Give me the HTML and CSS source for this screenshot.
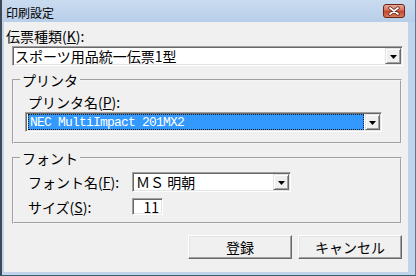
FILE: index.html
```html
<!DOCTYPE html>
<html lang="ja">
<head>
  <meta charset="UTF-8">
  <title>印刷設定</title>
  <link rel="stylesheet" href="styles.css">
</head>
<body>
  <div class="window">
    <div class="titlebar">
      <span class="title">印刷設定</span>
      <span class="close">
        <svg width="22" height="14" viewBox="0 0 22 14">
          <defs>
            <linearGradient id="cg" x1="0" y1="0" x2="0" y2="1">
              <stop offset="0" stop-color="#eab0a2"/>
              <stop offset="0.45" stop-color="#d66d55"/>
              <stop offset="0.5" stop-color="#c3442c"/>
              <stop offset="1" stop-color="#d9805f"/>
            </linearGradient>
          </defs>
          <rect x="0.5" y="0.5" width="21" height="13" rx="2.5" fill="url(#cg)" stroke="#6f2619"/>
          <path d="M7 4l8 6M15 4l-8 6" stroke="#5a1f14" stroke-width="3.4" stroke-linecap="round"/>
          <path d="M7 4l8 6M15 4l-8 6" stroke="#fff" stroke-width="1.8" stroke-linecap="round"/>
        </svg>
      </span>
    </div>
    <div class="client">
      <div class="label top-label">伝票種類(<u>K</u>):</div>
      <div class="combo combo-wide">
        <span class="combo-text">スポーツ用品統一伝票1型</span>
        <span class="drop"><svg width="7" height="4"><path d="M0 0h7L3.5 4z"/></svg></span>
      </div>

      <fieldset class="group">
        <legend>プリンタ</legend>
        <div class="label group-label">プリンタ名(<u>P</u>):</div>
        <div class="combo combo-printer">
          <span class="combo-text selected">NEC MultiImpact 201MX2</span>
          <span class="drop"><svg width="7" height="4"><path d="M0 0h7L3.5 4z"/></svg></span>
        </div>
      </fieldset>

      <fieldset class="group group-font">
        <legend>フォント</legend>
        <div class="row">
          <span class="row-label">フォント名(<u>F</u>):</span>
          <div class="combo combo-font">
            <span class="combo-text">ＭＳ 明朝</span>
            <span class="drop"><svg width="7" height="4"><path d="M0 0h7L3.5 4z"/></svg></span>
          </div>
        </div>
        <div class="row">
          <span class="row-label">サイズ(<u>S</u>):</span>
          <div class="textbox">11</div>
        </div>
      </fieldset>

      <div class="buttons">
        <button type="button">登録</button>
        <button type="button">キャンセル</button>
      </div>
    </div>
  </div>
</body>
</html>
```

FILE: styles.css
```css
* {
  box-sizing: border-box;
}
body {
  margin: 0;
  font-family: "Noto Sans CJK JP", sans-serif;
  font-size: 14px;
  color: #000;
}
.window {
  width: 416px;
  height: 276px;
  display: flex;
  flex-direction: column;
  background: #c0d4eb;
  border-left: 2px solid #3f4a56;
  border-right: 1px solid #5d7793;
  border-bottom: 1px solid #3c5b75;
}
.titlebar {
  height: 22px;
  display: flex;
  align-items: flex-start;
  justify-content: space-between;
  padding: 0 10px 0 4px;
  background: linear-gradient(#c9dbef, #b8cee9);
}
.title {
  font-size: 12px;
  line-height: 16px;
  margin-top: 5px;
}
.close {
  margin-top: 4px;
  height: 14px;
  line-height: 0;
}
.client {
  flex: 1;
  margin: 0 7px 3px 2px;
  padding-top: 6px;
  background: #f0f0f0;
}
.label {
  line-height: 16px;
}
.top-label {
  margin-left: 2px;
}

/* コンボボックス */
.combo {
  display: flex;
  height: 20px;
  padding: 1px;
  background: #fff;
  border: 1px solid;
  border-color: #a0a0a0 #fff #fff #a0a0a0;
  box-shadow: inset 1px 1px #696969, inset -1px -1px #e3e3e3;
}
.combo-text {
  flex: 1;
  display: flex;
  align-items: center;
  padding-left: 1px;
  white-space: nowrap;
}
.drop {
  width: 16px;
  height: 16px;
  display: flex;
  align-items: center;
  justify-content: center;
  background: #f0f0f0;
  border: 1px solid;
  border-color: #e3e3e3 #696969 #696969 #e3e3e3;
  box-shadow: inset 1px 1px #fff, inset -1px -1px #a0a0a0;
}
.drop svg {
  display: block;
  margin-top: 1px;
}
.combo-wide {
  margin: 2px 0 0 8px;
  width: 391px;
}

/* グループ */
.group {
  margin: 6px 0 0 8px;
  width: 390px;
  padding: 0 0 10px;
  border: 2px groove #f4f4f4;
  min-width: 0;
}
.group legend {
  margin-left: 6px;
  padding: 0 2px;
  line-height: 16px;
}
.group-label {
  margin: 6px 0 0 14px;
}
.combo-printer {
  margin: 2px 0 0 11px;
  width: 357px;
}
.selected {
  flex: none;
  width: 336px;
  margin: 0 1px;
  height: 16px;
  padding-left: 1px;
  background: #3399ff;
  color: #fff;
  border: 1px dotted #1a1a1a;
  font-family: "Liberation Mono", monospace;
  font-size: 13px;
  letter-spacing: -0.8px;
}
.group-font {
  padding-bottom: 7px;
}
.row {
  display: flex;
  align-items: center;
  margin: 6px 0 0 14px;
}
.row-label {
  width: 104px;
  line-height: 16px;
}
.combo-font {
  width: 159px;
}
.combo-font .combo-text {
  padding-left: 2px;
}
.textbox {
  width: 31px;
  height: 17px;
  display: flex;
  align-items: center;
  justify-content: flex-end;
  padding-right: 3px;
  background: #fff;
  border: 1px solid;
  border-color: #a0a0a0 #fff #fff #a0a0a0;
  box-shadow: inset 1px 1px #696969, inset -1px -1px #e3e3e3;
}

/* ボタン */
.buttons {
  display: flex;
  justify-content: flex-end;
  gap: 6px;
  margin: 11px 6px 0 0;
}
button {
  width: 104px;
  height: 24px;
  padding: 0;
  font-family: "Noto Sans CJK JP", sans-serif;
  font-size: 14px;
  color: #000;
  background: #f0f0f0;
  border: 1px solid;
  border-color: #fff #696969 #696969 #fff;
  box-shadow: inset -1px -1px #a0a0a0, inset 1px 1px #e3e3e3;
}
```
